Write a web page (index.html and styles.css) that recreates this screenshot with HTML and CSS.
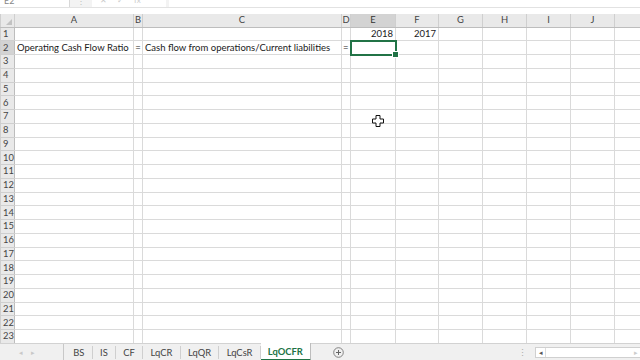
FILE: index.html
```html
<!DOCTYPE html>
<html lang="en">
<head>
    <meta charset="UTF-8">
    <title>LqOCFR - Excel</title>
    <link rel="stylesheet" href="styles.css">
</head>
<body>
    <!-- 编辑栏（顶部被截掉一半） -->
    <div class="formula-bar">
        <div class="name-box">E2</div>
        <div class="bar-dots">⋮</div>
        <div class="fx-box"><span>✕</span><span>✓</span><span class="fx">fx</span></div>
        <div class="formula-input"></div>
    </div>

    <div class="sheet">
        <table class="grid">
            <colgroup>
                <col class="c-rh"><col class="c-a"><col class="c-b"><col class="c-c"><col class="c-d">
                <col class="c-e"><col class="c-f"><col class="c-g"><col class="c-h"><col class="c-i">
                <col class="c-j"><col class="c-k">
            </colgroup>
            <tr class="head">
                <th class="corner"><span class="tri"></span></th>
                <th>A</th><th>B</th><th>C</th><th>D</th><th class="sel">E</th>
                <th>F</th><th>G</th><th>H</th><th>I</th><th>J</th><th>K</th>
            </tr>
            <tr><th>1</th><td></td><td></td><td></td><td></td><td class="num">2018</td><td class="num">2017</td><td></td><td></td><td></td><td></td><td></td></tr>
            <tr>
                <th class="sel-row">2</th>
                <td>Operating Cash Flow Ratio</td>
                <td class="mid">=</td>
                <td>Cash flow from operations/Current liabilities</td>
                <td class="mid">=</td>
                <td class="active"><span class="handle"></span></td>
                <td></td><td></td><td></td><td></td><td></td><td></td>
            </tr>
            <tr><th>3</th><td></td><td></td><td></td><td></td><td></td><td></td><td></td><td></td><td></td><td></td><td></td></tr>
            <tr><th>4</th><td></td><td></td><td></td><td></td><td></td><td></td><td></td><td></td><td></td><td></td><td></td></tr>
            <tr><th>5</th><td></td><td></td><td></td><td></td><td></td><td></td><td></td><td></td><td></td><td></td><td></td></tr>
            <tr><th>6</th><td></td><td></td><td></td><td></td><td></td><td></td><td></td><td></td><td></td><td></td><td></td></tr>
            <tr><th>7</th><td></td><td></td><td></td><td></td><td></td><td></td><td></td><td></td><td></td><td></td><td></td></tr>
            <tr><th>8</th><td></td><td></td><td></td><td></td><td></td><td></td><td></td><td></td><td></td><td></td><td></td></tr>
            <tr><th>9</th><td></td><td></td><td></td><td></td><td></td><td></td><td></td><td></td><td></td><td></td><td></td></tr>
            <tr><th>10</th><td></td><td></td><td></td><td></td><td></td><td></td><td></td><td></td><td></td><td></td><td></td></tr>
            <tr><th>11</th><td></td><td></td><td></td><td></td><td></td><td></td><td></td><td></td><td></td><td></td><td></td></tr>
            <tr><th>12</th><td></td><td></td><td></td><td></td><td></td><td></td><td></td><td></td><td></td><td></td><td></td></tr>
            <tr><th>13</th><td></td><td></td><td></td><td></td><td></td><td></td><td></td><td></td><td></td><td></td><td></td></tr>
            <tr><th>14</th><td></td><td></td><td></td><td></td><td></td><td></td><td></td><td></td><td></td><td></td><td></td></tr>
            <tr><th>15</th><td></td><td></td><td></td><td></td><td></td><td></td><td></td><td></td><td></td><td></td><td></td></tr>
            <tr><th>16</th><td></td><td></td><td></td><td></td><td></td><td></td><td></td><td></td><td></td><td></td><td></td></tr>
            <tr><th>17</th><td></td><td></td><td></td><td></td><td></td><td></td><td></td><td></td><td></td><td></td><td></td></tr>
            <tr><th>18</th><td></td><td></td><td></td><td></td><td></td><td></td><td></td><td></td><td></td><td></td><td></td></tr>
            <tr><th>19</th><td></td><td></td><td></td><td></td><td></td><td></td><td></td><td></td><td></td><td></td><td></td></tr>
            <tr><th>20</th><td></td><td></td><td></td><td></td><td></td><td></td><td></td><td></td><td></td><td></td><td></td></tr>
            <tr><th>21</th><td></td><td></td><td></td><td></td><td></td><td></td><td></td><td></td><td></td><td></td><td></td></tr>
            <tr><th>22</th><td></td><td></td><td></td><td></td><td></td><td></td><td></td><td></td><td></td><td></td><td></td></tr>
            <tr><th>23</th><td></td><td></td><td></td><td></td><td></td><td></td><td></td><td></td><td></td><td></td><td></td></tr>
        </table>

        <!-- 鼠标光标（白色十字） -->
        <svg class="cursor" width="12" height="12" viewBox="0 0 12 12">
            <path d="M4 0.5h4v3.5h3.5v4h-3.5v3.5h-4v-3.5h-3.5v-4h3.5z" fill="#fff" stroke="#111" stroke-width="1"/>
        </svg>
    </div>

    <!-- 工作表标签栏 -->
    <div class="tabbar">
        <div class="nav"><span>◂</span><span>▸</span></div>
        <div class="tabs">
            <div class="tab">BS</div>
            <div class="tab">IS</div>
            <div class="tab">CF</div>
            <div class="tab">LqCR</div>
            <div class="tab">LqQR</div>
            <div class="tab">LqCsR</div>
            <div class="tab active">LqOCFR</div>
        </div>
        <div class="add">
            <svg width="11" height="11" viewBox="0 0 11 11">
                <circle cx="5.5" cy="5.5" r="4.8" fill="none" stroke="#777" stroke-width="0.9"/>
                <path d="M5.5 3v5M3 5.5h5" stroke="#666" stroke-width="1"/>
            </svg>
        </div>
        <div class="spacer"></div>
        <div class="split">⋮</div>
        <div class="hscroll"><span class="arrow">◂</span><span class="track"></span><span class="arrow faint">▸</span></div>
    </div>
</body>
</html>
```

FILE: styles.css
```css
/* 全局样式 */
body {
    margin: 0;
    width: 640px;
    height: 360px;
    overflow: hidden;
    background: #fff;
    font-family: Lato, "Liberation Sans", Arial, sans-serif;
    color: #222;
}

/* 编辑栏 */
.formula-bar {
    height: 7px;
    display: flex;
    background: #f3f3f3;
    border-bottom: 1px solid #e2e2e2;
    overflow: hidden;
}

.name-box {
    width: 70px;
    background: #fff;
    border-right: 1px solid #d8d8d8;
    font-size: 9px;
    line-height: 1px;
    padding-left: 4px;
    color: #888;
    box-sizing: border-box;
}

.bar-dots {
    width: 22px;
    font-size: 8px;
    line-height: 3px;
    color: #bbb;
    text-align: center;
}

.fx-box {
    width: 74px;
    background: #fff;
    display: flex;
    gap: 10px;
    padding-left: 8px;
    font-size: 8px;
    line-height: 0;
    color: #ccc;
    box-sizing: border-box;
}

.formula-input {
    flex: 1;
    margin-left: 3px;
    background: #fff;
}

/* 表格区域 */
.sheet {
    position: relative;
    margin-top: 6px;
    height: 329px;
    overflow: hidden;
}

.grid {
    border-collapse: collapse;
    table-layout: fixed;
    width: 674px;
    font-size: 9.5px;
}

.c-rh { width: 14px; }
.c-a { width: 119px; }
.c-b { width: 9px; }
.c-c { width: 199px; }
.c-d { width: 9px; }
.c-e { width: 45px; }
.c-f { width: 43px; }
.c-g { width: 44px; }
.c-h { width: 44px; }
.c-i { width: 44px; }
.c-j { width: 44px; }
.c-k { width: 60px; }

.grid tr {
    height: 13.75px;
}

.grid tr.head {
    height: 13px;
}

.grid td {
    border: 1px solid #dadada;
    padding: 0 2px;
    white-space: nowrap;
    overflow: visible;
    line-height: 12px;
    color: #1a1a1a;
}

.grid th {
    background: #e9e9e9;
    border: 1px solid #cfcfcf;
    font-weight: normal;
    font-size: 9.4px;
    color: #444;
    padding: 0;
    line-height: 12px;
}

.grid tr.head th {
    border-top: none;
    border-bottom: 1px solid #bdbdbd;
}

.grid tr:not(.head) th {
    text-align: left;
    padding-left: 2px;
    border-right: 1px solid #bdbdbd;
}

.grid th.corner {
    position: relative;
}

.tri {
    position: absolute;
    right: 2px;
    bottom: 2px;
    border-left: 6px solid transparent;
    border-bottom: 6px solid #c2c2c2;
}

/* 选中的列头和行头 */
.grid th.sel {
    background: #d3d3d3;
    border-bottom: 2px solid #217346;
    color: #333;
}

.grid th.sel-row {
    background: #d3d3d3;
    border-right: 2px solid #217346;
}

.grid td.num {
    text-align: right;
}

.grid td.mid {
    text-align: center;
    padding: 0;
}

/* 活动单元格 */
.grid td.active {
    border: 2px solid #217346;
    position: relative;
}

.handle {
    position: absolute;
    right: -4px;
    bottom: -4px;
    width: 5px;
    height: 5px;
    background: #217346;
    border: 1px solid #fff;
}

.cursor {
    position: absolute;
    left: 372px;
    top: 101px;
}

/* 标签栏 */
.tabbar {
    height: 17px;
    display: flex;
    align-items: stretch;
    background: #f0f0f0;
    border-top: 1px solid #d2d2d2;
    font-size: 9.4px;
    color: #444;
}

.nav {
    width: 64px;
    display: flex;
    gap: 8px;
    padding-left: 19px;
    box-sizing: border-box;
    align-items: center;
    font-size: 7px;
    color: #c8c8c8;
    border-right: 1px solid #c8c8c8;
}

.tabs {
    display: flex;
    margin-left: 2px;
}

.tab {
    padding: 0 7.3px;
    display: flex;
    align-items: center;
    border-right: 1px solid #cfcfcf;
    margin: 2px 0;
}

.tab.active {
    background: #fff;
    color: #217346;
    font-weight: bold;
    margin: -1px 0 0;
    padding: 0 7px;
    border-bottom: 2px solid #217346;
    border-right: 1px solid #bdbdbd;
}

.add {
    display: flex;
    align-items: center;
    padding-left: 22px;
}

.spacer {
    flex: 1;
}

.split {
    color: #aaa;
    font-size: 9px;
    display: flex;
    align-items: center;
    padding-right: 8px;
}

.hscroll {
    width: 104px;
    margin: 3px 0;
    background: #fff;
    border: 1px solid #d0d0d0;
    border-right: none;
    display: flex;
    align-items: center;
    font-size: 7px;
}

.hscroll .arrow {
    width: 9px;
    text-align: center;
    color: #555;
    border-right: 1px solid #ddd;
}

.hscroll .track {
    flex: 1;
}

.hscroll .arrow.faint {
    color: #ccc;
    border: none;
}
```
